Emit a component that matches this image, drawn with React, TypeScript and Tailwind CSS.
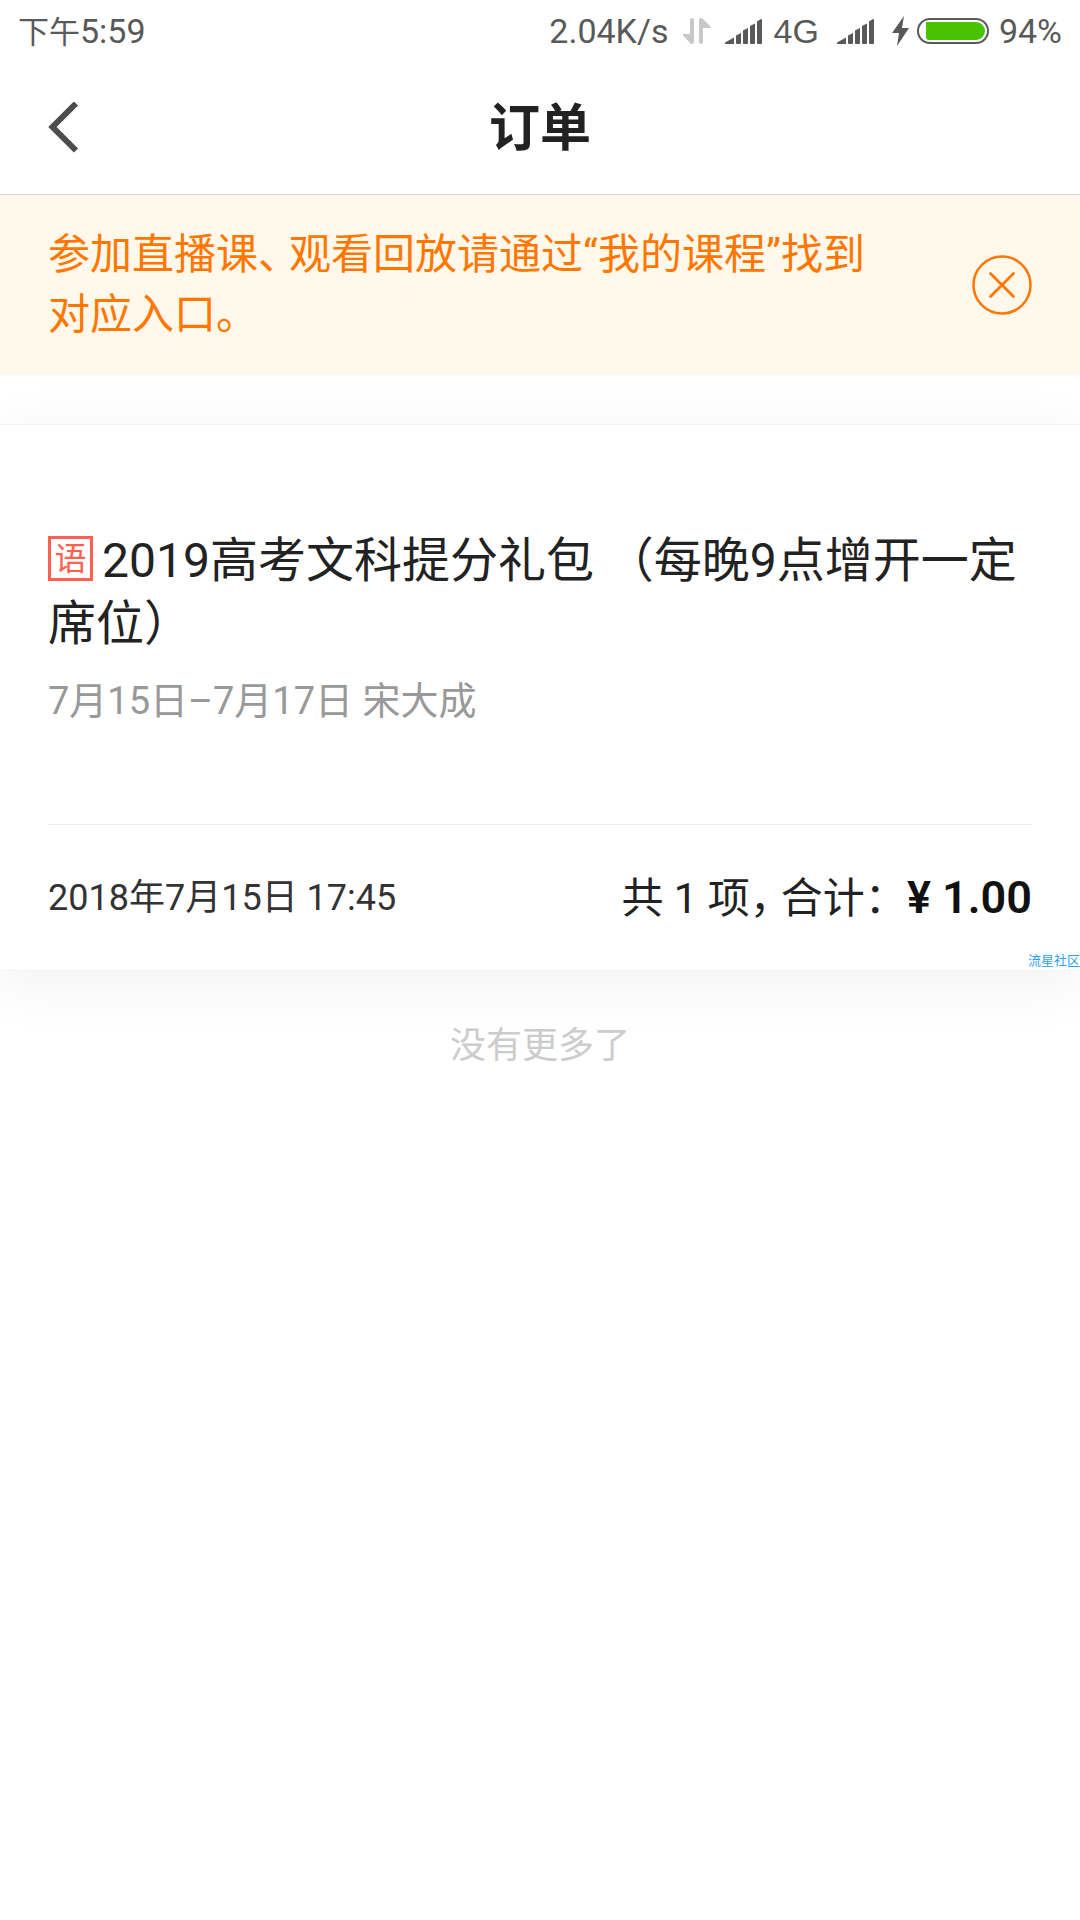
import { useState } from "react";

const order = {
  subject: "语",
  title: "2019高考文科提分礼包 （每晚9点增开一定席位）",
  schedule: "7月15日–7月17日 宋大成",
  createdAt: "2018年7月15日 17:45",
  count: 1,
  total: "1.00",
};

function TrafficIcon() {
  return (
    <svg width="28" height="26" viewBox="0 0 28 26" fill="#c8c8c8" aria-hidden="true">
      <path d="M7 2a2 2 0 0 1 4 0v22a2 2 0 0 1-3.4 1.4L0 17.5V16h7z" />
      <path d="M20 24a2 2 0 0 1-4 0V2c0-1.8 2-2.6 3.4-1.4L27.5 8.5V10H20z" />
    </svg>
  );
}

function SignalIcon() {
  return (
    <svg width="37" height="25" viewBox="0 0 37 25" fill="#595959" aria-hidden="true">
      <path d="M0 23.5L9 18.5V25H1a1 1 0 0 1-1-1.5z" />
      <path d="M11 16.5l5-2.5v10a1 1 0 0 1-1 1h-3a1 1 0 0 1-1-1z" />
      <path d="M18 11.5l5-2.5v15a1 1 0 0 1-1 1h-3a1 1 0 0 1-1-1z" />
      <path d="M25 7l5-2.5V24a1 1 0 0 1-1 1h-3a1 1 0 0 1-1-1z" />
      <path d="M32 2.5L36 0a1 1 0 0 1 1 1v23a1 1 0 0 1-1 1h-3a1 1 0 0 1-1-1z" />
    </svg>
  );
}

function BatteryIcon() {
  return (
    <svg width="72" height="26" viewBox="0 0 72 26" fill="none" aria-hidden="true">
      <rect x="1" y="1" width="70" height="24" rx="12" stroke="#595959" strokeWidth="2" />
      <path d="M9 4h50a9 9 0 0 1 0 18H12a3 3 0 0 1-3-3z" fill="#47c300" />
    </svg>
  );
}

function StatusBar() {
  return (
    <div className="flex h-[62px] items-center justify-between px-[18px] text-[34px] leading-none text-[#595959]">
      <div>
        <span className="text-[31px]">下午</span>5:59
      </div>
      <div className="flex items-center">
        <span className="mr-3.5">2.04K/s</span>
        <TrafficIcon />
        <span className="ml-3.5 mr-3">
          <SignalIcon />
        </span>
        <span className="font-['Liberation_Sans',sans-serif]">4G</span>
        <span className="mx-[18px]">
          <SignalIcon />
        </span>
        <svg width="17" height="30" viewBox="0 0 17 30" fill="#595959" aria-hidden="true">
          <path d="M12 0L0 17h7L5 30 17 12h-7z" />
        </svg>
        <span className="ml-2 mr-2.5">
          <BatteryIcon />
        </span>
        <span>94%</span>
      </div>
    </div>
  );
}

function Header() {
  return (
    <header className="grid grid-cols-[1fr_auto_1fr] items-center border-b border-[#d9d9d9] px-12">
      <button type="button" aria-label="返回" className="flex h-[132px] w-24 items-center">
        <svg width="32" height="52" viewBox="0 0 32 52" fill="none" aria-hidden="true">
          <path d="M28 1.5L4.5 25 28 48.5" stroke="#4d4d4d" strokeWidth="6" />
        </svg>
      </button>
      <h1 className="text-[51px] font-bold leading-none text-[#222222]">订单</h1>
    </header>
  );
}

// Mid-sentence mark set on its half-width form with a small gap after it.
function Mark({ children }: { children: string }) {
  return <span className="mr-2.5 [font-feature-settings:'halt']">{children}</span>;
}

function Notice({ onClose }: { onClose: () => void }) {
  return (
    <div className="flex items-center justify-between gap-[72px] bg-[#fff8eb] px-12 py-[30px]">
      <p className="flex-1 text-[42px] leading-[60px] text-[#ff7700]">
        参加直播课<Mark>、</Mark>观看回放请通过“我的课程”找到对应入口。
      </p>
      <button type="button" aria-label="关闭" onClick={onClose} className="shrink-0">
        <svg width="60" height="60" viewBox="0 0 60 60" fill="none" stroke="#ff7700" aria-hidden="true">
          <circle cx="30" cy="30" r="28.5" strokeWidth="2.5" />
          <path d="M18.5 18.5l23 23M41.5 18.5l-23 23" strokeWidth="2.8" strokeLinecap="round" />
        </svg>
      </button>
    </div>
  );
}

function OrderCard() {
  return (
    <article className="relative mt-[49px] border-y border-[#f2f2f2] bg-white px-12 shadow-[0_12px_60px_rgba(0,0,0,0.06)]">
      <div className="pb-[93px] pt-[104px]">
        <h2 className="text-[48px] leading-[63px] text-[#222222]">
          <span className="mr-[9px] mt-[7px] inline-flex size-[45px] items-center justify-center border-3 border-[#ff6050] align-top text-[32px] leading-none text-[#ff6050]">
            {order.subject}
          </span>
          {order.title}
        </h2>
        <p className="mt-4 text-[38px] leading-[60px] text-[#999999]">{order.schedule}</p>
      </div>
      <div className="flex h-[146px] items-center justify-between border-t border-[#eeeeee]">
        <time className="text-[36px] text-[#333333]">{order.createdAt}</time>
        <p className="text-[42px] text-[#222222]">
          共 {order.count} 项<Mark>，</Mark>合计：
          <strong className="text-[45px] font-semibold text-[#111111]">¥ {order.total}</strong>
        </p>
      </div>
      <span className="absolute bottom-0 right-0 text-[13px] text-[#2ba0f5]">流星社区</span>
    </article>
  );
}

export default function App() {
  const [noticeOpen, setNoticeOpen] = useState(true);

  return (
    <div
      lang="zh-CN"
      className="min-h-screen overflow-x-hidden bg-white font-[Roboto,'Noto_Sans_CJK_SC',sans-serif]"
    >
      <StatusBar />
      <Header />
      <main>
        {noticeOpen && <Notice onClose={() => setNoticeOpen(false)} />}
        <OrderCard />
        <p className="mt-12 text-center text-[36px] text-[#cccccc]">没有更多了</p>
      </main>
    </div>
  );
}
